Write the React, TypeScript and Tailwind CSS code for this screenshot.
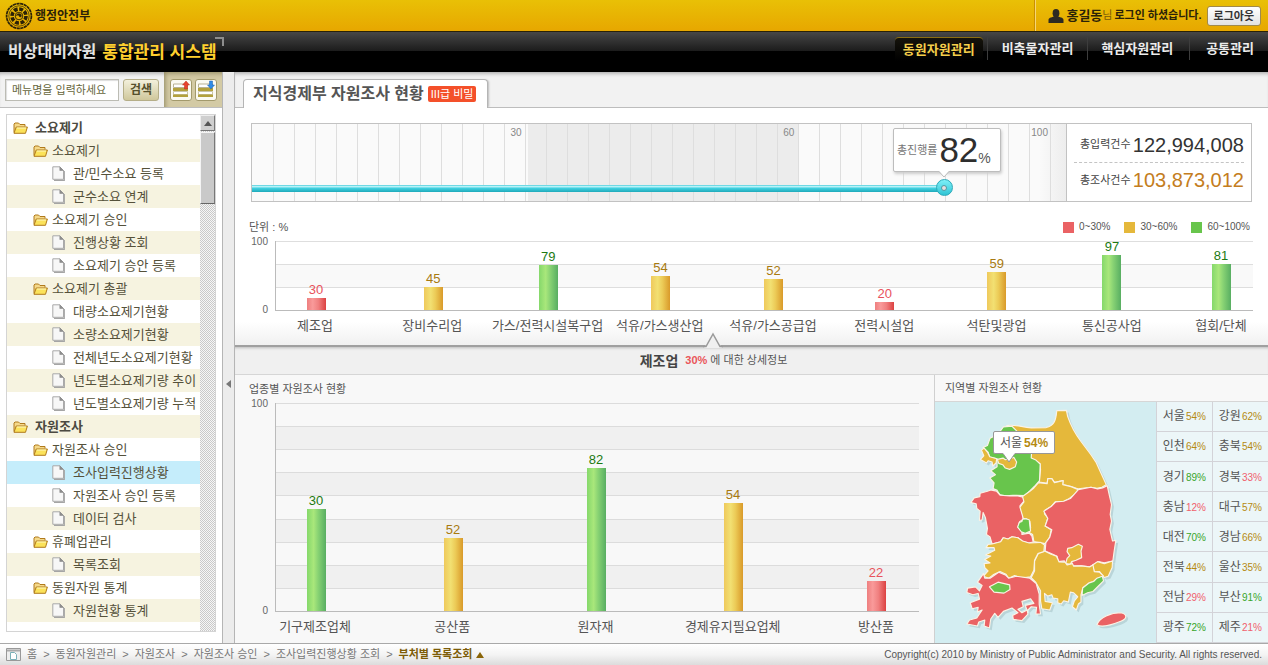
import React from "react";

type Tone = "red" | "yellow" | "green";

const barTone: Record<Tone, string> = {
  red: "bg-[linear-gradient(to_right,#ee7f7f,#f99a9a_30%,#f08080_60%,#dc4141)]",
  yellow: "bg-[linear-gradient(to_right,#efc95c,#f2e072_35%,#eccb57_60%,#d99a2a)]",
  green: "bg-[linear-gradient(to_right,#85d86b,#a9e77b_35%,#86d173_60%,#58ae62)]",
};
const valueTone: Record<Tone, string> = {
  red: "text-[#e8525c]",
  yellow: "text-[#a87a10]",
  green: "text-[#1d7a12]",
};
const cellTone: Record<Tone, string> = {
  red: "text-[#f0606c]",
  yellow: "text-[#b58a12]",
  green: "text-[#38a52a]",
};

type Bar = { name: string; value: number; size: number; tone: Tone; gap: number };

const industryBars: Bar[] = [
  { name: "제조업", value: 30, size: 12, tone: "red", gap: 0 },
  { name: "장비수리업", value: 45, size: 23, tone: "yellow", gap: 53 },
  { name: "가스/전력시설복구업", value: 79, size: 45, tone: "green", gap: 51 },
  { name: "석유/가스생산업", value: 54, size: 34, tone: "yellow", gap: 48 },
  { name: "석유/가스공급업", value: 52, size: 31, tone: "yellow", gap: 49 },
  { name: "전력시설업", value: 20, size: 8, tone: "red", gap: 47 },
  { name: "석탄및광업", value: 59, size: 38, tone: "yellow", gap: 48 },
  { name: "통신공사업", value: 97, size: 55, tone: "green", gap: 51 },
  { name: "협회/단체", value: 81, size: 46, tone: "green", gap: 45 },
];

const detailBars: Bar[] = [
  { name: "기구제조업체", value: 30, size: 102, tone: "green", gap: 0 },
  { name: "공산품", value: 52, size: 73, tone: "yellow", gap: 73 },
  { name: "원자재", value: 82, size: 143, tone: "green", gap: 79 },
  { name: "경제유지필요업체", value: 54, size: 108, tone: "yellow", gap: 73 },
  { name: "방산품", value: 22, size: 30, tone: "red", gap: 79 },
];

type Node = { name: string; level: 1 | 2 | 3; active?: boolean };
const tree: Node[] = [
  { name: "소요제기", level: 1 },
  { name: "소요제기", level: 2 },
  { name: "관/민수소요 등록", level: 3 },
  { name: "군수소요 연계", level: 3 },
  { name: "소요제기 승인", level: 2 },
  { name: "진행상황 조회", level: 3 },
  { name: "소요제기 승안 등록", level: 3 },
  { name: "소요제기 총괄", level: 2 },
  { name: "대량소요제기현황", level: 3 },
  { name: "소량소요제기현황", level: 3 },
  { name: "전체년도소요제기현황", level: 3 },
  { name: "년도별소요제기량 추이", level: 3 },
  { name: "년도별소요제기량 누적", level: 3 },
  { name: "자원조사", level: 1 },
  { name: "자원조사 승인", level: 2 },
  { name: "조사입력진행상황", level: 3, active: true },
  { name: "자원조사 승인 등록", level: 3 },
  { name: "데이터 검사", level: 3 },
  { name: "휴폐업관리", level: 2 },
  { name: "목록조회", level: 3 },
  { name: "동원자원 통계", level: 2 },
  { name: "자원현황 통계", level: 3 },
];

type Region = [string, number, Tone];
const regions: [Region, Region][] = [
  [["서울", 54, "yellow"], ["강원", 62, "yellow"]],
  [["인천", 64, "yellow"], ["충북", 54, "yellow"]],
  [["경기", 89, "green"], ["경북", 33, "red"]],
  [["충남", 12, "red"], ["대구", 57, "yellow"]],
  [["대전", 70, "green"], ["경남", 66, "yellow"]],
  [["전북", 44, "yellow"], ["울산", 35, "yellow"]],
  [["전남", 29, "red"], ["부산", 91, "green"]],
  [["광주", 72, "green"], ["제주", 21, "red"]],
];

function Emblem() {
  return (
    <svg viewBox="0 0 28 28" className="h-7 w-7" fill="none" stroke="#2b2208">
      <circle cx="14" cy="14" r="12.400" strokeWidth="1.700" strokeDasharray="3.200 0.500" />
      <circle cx="14" cy="14" r="10.200" strokeWidth="0.700" />
      <circle cx="14" cy="14" r="7" strokeWidth="3.600" strokeDasharray="3.900 1.600" />
      <circle cx="14" cy="14" r="3.800" strokeWidth="0.900" />
      <path d="M11.5 14a2.5 2.5 0 0 1 5 0 1.3 1.3 0 0 1-2.5 0 1.3 1.3 0 0 0-2.5 0z" fill="#2b2208" strokeWidth="0.4" />
    </svg>
  );
}

function FolderIcon() {
  return (
    <svg viewBox="0 0 15 12" className="h-3 w-[15px] shrink-0">
      <path d="M1 10.5V2l1-1h3.500l1.500 1.500h5v2" fill="#f5d98a" stroke="#b07a1c" />
      <path d="M1 11.300l2.200-6.300h11.200l-1.900 6.300z" fill="#fbe25a" stroke="#b07a1c" />
      <path d="M3.800 6h9.200" stroke="#fff8c0" />
    </svg>
  );
}

function PageIcon() {
  return (
    <svg viewBox="0 0 13 15" className="h-[15px] w-[13px] shrink-0">
      <path d="M2 14.300h10.300V5" fill="none" stroke="#a5a5a5" strokeWidth="1.200" />
      <path d="M.8.8h7l3.700 3.700v8.800H.8z" fill="#f7f7f7" stroke="#a9a9a9" />
      <path d="M7.800.8v3.700h3.700z" fill="#8d8d8d" stroke="#8d8d8d" strokeWidth=".6" />
    </svg>
  );
}

function ListIcon({ up }: { up: boolean }) {
  return (
    <svg viewBox="0 0 20 20" className="h-5 w-5">
      <path d="M2.500 4h14v3.500h-14z" fill="#fff" stroke="#b9b394" />
      <path d="M2 8h15v3H2z" fill="#b3a13c" />
      <path d="M2.500 11.500h14v3h-14z" fill="#fff" stroke="#c9c4a8" />
      <path d="M2 14.500h15v2.500H2z" fill="#b3a13c" />
      {up ? (
        <path d="M15 1l3.500 4h-2v4h-3V5h-2z" fill="#e8432e" stroke="#b92a18" strokeWidth=".5" />
      ) : (
        <path d="M15 9l3.500-4h-2V1h-3v4h-2z" fill="#2f8be8" stroke="#1a62b0" strokeWidth=".5" />
      )}
    </svg>
  );
}

function Header() {
  return (
    <header>
      <div className="flex h-8 items-center justify-between border-b border-[#2a2208] bg-[linear-gradient(#e9c006,#e7a700)] pl-[5px]">
        <a href="#home" className="flex items-center gap-[2px] text-xs font-bold text-[#2b2208]">
          <Emblem />
          행정안전부
        </a>
        <div className="flex h-full items-center border-l border-[#f6d676] pr-[7px] pl-3 text-[11px] text-[#2b2208] shadow-[-1px_0_0_#c98f00]">
          <svg viewBox="0 0 16 14" className="mr-[2px] h-[14px] w-4" fill="#2d2a22">
            <ellipse cx="8" cy="4.300" rx="3.400" ry="4.200" />
            <path d="M.5 14v-3c0-1.500 1-2.200 2.500-2.600L6 7.600h4l3 .8c1.500.4 2.500 1.100 2.500 2.600v3z" />
          </svg>
          <strong className="text-[13px]">홍길동</strong>
          <span className="text-[#7a5a08]">님</span>
          <span className="ml-[2px] font-bold">로그인 하셨습니다.</span>
          <button className="ml-[5px] h-5 rounded-[3px] border border-[#a08a4c] bg-[linear-gradient(#ffffff,#e2e2e2)] px-[6px] leading-4 font-bold text-[#333]">
            로그아웃
          </button>
        </div>
      </div>
      <div className="flex h-10 justify-between bg-[linear-gradient(#474747,#1c1c1c_47%,#000_48%,#000)]">
        <h1 className="relative flex items-center gap-[6px] pl-2 text-[16px] font-bold text-[#e4e4e4]">
          비상대비자원
          <span className="text-[17px] text-[#ffcf2e]">통합관리 시스템</span>
          <span className="absolute top-[5px] -right-[7px] h-[9px] w-[9px] border-t-2 border-r-2 border-[#8e8e8e]" />
        </h1>
        <nav className="flex items-start pt-[5px] text-[13px] leading-[23px] font-bold text-[#ececec]">
          <a
            href="#mobilize"
            className="mr-1 rounded-t border-t border-[#8b6e12] bg-[linear-gradient(#15130c,#000)] px-2 text-[#f5cf4b]"
          >
            동원자원관리
          </a>
          <a href="#stock" className="border-l border-[#3d3d3d] px-[14px]">비축물자관리</a>
          <a href="#core" className="border-l border-[#3d3d3d] pr-4 pl-[13px]">핵심자원관리</a>
          <a href="#common" className="border-l border-[#3d3d3d] pr-[14px] pl-4">공통관리</a>
        </nav>
      </div>
    </header>
  );
}

const rowIndent = {
  1: "pl-[6px] gap-[7px] font-bold text-[#4c4a42]",
  2: "pl-[26px] gap-1",
  3: "pl-[45px] gap-2",
};

function Sidebar() {
  return (
    <aside className="flex w-[222px] shrink-0 flex-col bg-white">
      <form className="flex h-9 border-b border-[#bdbdbd] bg-[#f2f2f2] shadow-[inset_0_4px_4px_-3px_#999]">
        <div className="flex flex-1 items-center gap-1 pl-[5px]">
          <input
            aria-label="메뉴명"
            placeholder="메뉴명을 입력하세요"
            className="h-[22px] w-[114px] border border-[#bcbcb4] bg-white px-[6px] text-[11px] shadow-[inset_1px_1px_1px_#ddd] placeholder:text-[#66663c]"
          />
          <button
            type="button"
            className="h-[22px] w-9 rounded-[3px] border border-[#b5ae88] bg-[linear-gradient(#f3f0dc,#cfc79b)] text-xs leading-4 font-bold text-[#55502c]"
          >
            검색
          </button>
        </div>
        <div className="flex w-[58px] items-center gap-[3px] bg-[#d3caa4] pl-[6px] shadow-[inset_4px_4px_5px_-3px_#8f8660]">
          <button type="button" aria-label="모두 접기" className="flex h-[22px] w-[22px] items-center justify-center rounded-[3px] border border-[#a39a6c] bg-[#fbfaf2]">
            <ListIcon up />
          </button>
          <button type="button" aria-label="모두 펼치기" className="flex h-[22px] w-[22px] items-center justify-center rounded-[3px] border border-[#a39a6c] bg-[#fbfaf2]">
            <ListIcon up={false} />
          </button>
        </div>
      </form>
      <div className="mx-[6px] mt-[6px] mb-[11px] flex flex-1 border border-[#d4d4d4]">
        <ul className="flex-1 pt-px text-[13px] text-[#55513a]">
          {tree.map((node, i) => (
            <li key={i} className={node.active ? "bg-[#c5edfb]" : i % 2 ? "bg-[#f6f3e0]" : "bg-white"}>
              <a href="#menu" className={`flex h-[23px] items-center whitespace-nowrap ${rowIndent[node.level]}`}>
                {node.level === 3 ? <PageIcon /> : <FolderIcon />}
                <span>{node.name}</span>
              </a>
            </li>
          ))}
        </ul>
        <div className="w-[15px] bg-[repeating-conic-gradient(#c9c9c9_0_25%,#f6f6f6_0_50%)] bg-[length:2px_2px]">
          <button
            aria-label="위로"
            className="flex h-4 w-full items-center justify-center border border-t-[#eee] border-r-[#777] border-b-[#777] border-l-[#eee] bg-[#cfcfcf]"
          >
            <svg viewBox="0 0 8 5" className="h-[5px] w-2" fill="#555">
              <path d="M4 0l4 5H0z" />
            </svg>
          </button>
          <div className="mt-px h-[72px] border border-t-[#f4f4f4] border-r-[#777] border-b-[#666] border-l-[#f4f4f4] bg-[#c9c9c9]" />
        </div>
      </div>
    </aside>
  );
}

function BarChart({ bars, plot, spacing }: { bars: Bar[]; plot: string; spacing: string }) {
  return (
    <div className="flex">
      <div className="mr-[7px] w-[19px] shrink-0 text-right text-[10px] leading-[10px] text-[#666]">
        <div className={`flex flex-col justify-between ${plot}`}>
          <span className="-mt-1">100</span>
          <span className="-mb-1">0</span>
        </div>
      </div>
      <div className="min-w-0 flex-1">
        <div className={`relative border-b border-l border-[#bbb] ${plot}`}>
          <div className="absolute inset-0 flex flex-col">
            {plot === "h-[70px]" ? (
              <>
                <div className="flex-1 border-t border-[#dedede]" />
                <div className="flex-1 border-y border-[#dedede] bg-[#f9f9f9]" />
                <div className="flex-1" />
              </>
            ) : (
              Array.from({ length: 9 }, (_, i) => (
                <div key={i} className={`flex-1 border-t border-[#dcdcdc] ${i % 2 ? "bg-[#f0f0f0]" : "bg-[#f8f8f8]"}`} />
              ))
            )}
          </div>
          <div className={`relative flex h-full items-end ${spacing}`}>
            {bars.map((bar) => (
              <React.Fragment key={bar.name}>
                <span className="basis-0" style={{ flexGrow: bar.gap }} />
                <div className="flex w-16 shrink-0 flex-col items-center">
                  <span className={`text-[13px] leading-[17px] ${valueTone[bar.tone]}`}>{bar.value}</span>
                  <div className={`w-[19px] ${barTone[bar.tone]}`} style={{ height: bar.size }} />
                </div>
              </React.Fragment>
            ))}
          </div>
        </div>
        <div className={`mt-[5px] flex h-[18px] items-center text-[13px] text-[#555] ${spacing}`}>
          {bars.map((bar) => (
            <React.Fragment key={bar.name}>
              <span className="basis-0" style={{ flexGrow: bar.gap }} />
              <span className="flex w-16 shrink-0 justify-center whitespace-nowrap">{bar.name}</span>
            </React.Fragment>
          ))}
        </div>
      </div>
    </div>
  );
}

function Progress() {
  return (
    <section className="flex h-[79px] border border-[#c2c2c2]">
      <div className="relative flex min-w-0 flex-1 text-right text-[10px] leading-[18px] text-[#888]">
        <div className="grow-[276] basis-0 bg-[#fafafa]"><p className="pr-[6px]">30</p></div>
        <div className="grow-[272] basis-0 bg-[#ececec]"><p className="pr-[5px]">60</p></div>
        <div className="grow-[267] basis-0 bg-[linear-gradient(to_right,#fafafa_90%,#ededed)]"><p className="pr-[18px]">100</p></div>
        <div className="absolute inset-0 bg-[repeating-linear-gradient(to_right,#dedede_0_1px,transparent_1px_21px)] [clip-path:inset(0_0_0_2px)]" />
        <div className="absolute top-[61px] left-0 h-[7px] w-[85%] border-t border-[#6fd9e4] bg-[linear-gradient(#d9fbff,#3fd0df_40%,#1fa9ba)]" />
        <div className="absolute top-[55px] left-[85%] -ml-2 flex h-[17px] w-[17px] items-center justify-center rounded-full border border-[#2ba9b8] bg-[linear-gradient(#7ff0f8,#30c4d4)]">
          <span className="h-[6px] w-[6px] rounded-full border border-[#4f9aa3] bg-[#e8dede]" />
        </div>
        <div className="absolute top-1 left-[85%] -ml-[51px] flex h-[44px] w-[108px] items-center rounded-[2px] border border-[#bdbdbd] bg-white pl-[3px] shadow-[1px_2px_3px_#ccc]">
          <span className="text-[11px] text-[#777]">총진행률</span>
          <strong className="ml-[2px] text-[35px] leading-10 font-normal text-[#2e2e2e]">82</strong>
          <span className="mt-4 text-[14px] text-[#555]">%</span>
          <svg viewBox="0 0 10 7" className="absolute top-[42px] left-[45px] h-[7px] w-[10px]">
            <path d="M0 0h10L5 6z" fill="#fff" />
            <path d="M0 .5l5 5.500 5-5.500" fill="none" stroke="#bdbdbd" />
          </svg>
        </div>
      </div>
      <dl className="flex w-[185px] shrink-0 flex-col justify-center border-l border-[#c2c2c2] bg-white px-[7px] text-[11px] text-[#444]">
        <div className="flex h-[35px] items-center justify-between border-b border-dashed border-[#c4c4c4] pl-[6px]">
          <dt>총입력건수</dt>
          <dd className="text-[20px] leading-6 text-[#333]">122,994,008</dd>
        </div>
        <div className="flex h-[35px] items-center justify-between pl-[6px]">
          <dt>총조사건수</dt>
          <dd className="text-[20px] leading-6 text-[#c47d20]">103,873,012</dd>
        </div>
      </dl>
    </section>
  );
}

const Y = "#e5b83b";
const R = "#ea6264";
const G = "#68c54c";
const provinces: [string, string, string][] = [
  ["강원", Y, "M216 152C240 148 258 156 290 159L335 158C358 152 364 140 367 107L396 106 400 125C412 160 425 180 440 200L470 240 485 262 500 295 516 330 503 338 488 341 470 338 432 343 410 336 385 330 386 318 360 323 352 312 340 312 338 326 314 322 318 285 317 268 304 258 288 250 292 230 262 200Z"],
  ["경기", G, "M206 156L232 154 246 168 275 190 292 215 290 250 304 256 317 268 315 318 300 335 285 350 270 363 235 362 212 364 195 360 186 346 175 342 178 325 165 310 182 300 168 288 187 276 187 252 165 247 160 232 145 218 158 212 166 190 190 178Z"],
  ["인천", Y, "M148 220L140 226 147 243 137 254 155 265 160 258 172 262 174 274 184 265 186 252 165 246 158 232Z"],
  ["서울", Y, "M188 254L205 250 212 255 238 248 246 262 242 276 225 284 212 280 204 270 192 266Z"],
  ["충남", R, "M178 348L186 350 196 362 225 364 250 364 266 368 268 380 256 394 264 420 266 434 255 442 250 458 262 472 262 480 284 476 292 485 296 503 282 506 262 500 250 490 232 487 220 494 205 490 198 502 172 509 166 488 155 480 158 462 152 430 145 414 142 436 134 438 136 410 126 402 124 388 108 384 118 370 135 366 136 356 158 350 168 346Z"],
  ["충북", Y, "M264 366L272 360 286 350 298 340 312 324 338 327 340 312 352 312 360 324 386 318 385 330 410 336 432 345 420 360 405 372 388 380 362 382 350 396 330 408 330 418 340 430 332 455 350 466 346 488 332 508 298 502 294 480 284 474 288 460 286 440 274 432 266 432 262 418 256 398 268 382Z"],
  ["대전", G, "M272 433L284 436 286 455 288 470 272 477 260 472 249 458 254 444 262 441 264 434Z"],
  ["경북", R, "M519 333L526 365 532 390 528 420 532 440 527 465 535 500 545 498 540 530 536 560 510 566 492 562 476 572 465 578 440 575 415 574 412 564 395 570 390 560 372 562 368 546 350 538 332 530 334 505 346 488 352 466 332 455 340 432 328 410 350 396 364 382 388 380 408 372 432 345 470 338 490 343 505 340Z"],
  ["대구", Y, "M400 522L412 520 432 510 444 516 440 530 442 550 425 558 412 562 408 570 394 568 398 552 406 544 398 532Z"],
  ["울산", Y, "M474 573L490 562 510 568 535 560 534 580 522 606 510 610 496 592 480 592Z"],
  ["경남", Y, "M330 530L350 540 366 546 374 563 392 564 398 572 414 568 418 576 440 575 466 578 476 572 480 592 496 594 508 606 490 612 478 622 465 626 446 640 440 662 440 684 432 690 426 708 414 698 420 680 430 668 418 656 408 654 402 684 388 680 380 690 370 686 370 674 356 672 352 662 340 666 330 658 332 682 354 686 346 708 322 704 318 680 318 650 304 625 290 610 300 590 300 560 312 536Z"],
  ["부산", G, "M443 664L445 642 465 626 478 622 488 612 504 606 508 620 494 634 476 652 460 656Z"],
  ["전북", Y, "M172 509L198 502 206 490 220 494 232 487 250 490 264 500 284 506 318 504 330 512 328 532 310 538 300 558 298 588 288 608 260 612 240 604 222 612 214 600 196 592 175 602 162 612 146 606 160 590 150 580 148 568 166 566 150 556 168 545 152 542 180 528 178 520 154 520 160 510Z"],
  ["전남", R, "M146 598L150 612 166 612 192 594 212 602 222 612 245 606 286 612 305 628 314 660 314 690 318 720 304 720 306 700 290 698 278 710 272 694 298 688 288 674 262 682 266 698 250 706 262 716 278 708 280 720 262 740 236 736 234 724 250 716 232 702 206 712 190 730 180 718 168 735 164 762 148 756 150 738 132 744 128 756 96 750 104 738 126 732 142 708 128 714 130 700 112 704 106 686 134 675 130 658 114 662 96 655 98 642 122 638 134 650 142 634 128 624Z"],
  ["광주", G, "M164 638L190 624 225 632 226 646 208 657 178 654Z"],
  ["제주", R, "M488 752C496 730 530 716 560 716 580 720 580 734 560 742 535 752 500 762 488 752Z"],
];

function RegionMap() {
  return (
    <div className="relative w-[221px] shrink-0 bg-[#d3edf1]">
      <svg viewBox="0 81 666 723" className="block w-full" role="img" aria-label="지역별 지도">
        <g transform="translate(7 7)" fill="#a9c6ca" opacity=".6">
          {provinces.map(([name, , d]) => (
            <path key={name} d={d} />
          ))}
        </g>
        <g stroke="#fbf3e6" strokeWidth="3.500" strokeLinejoin="round">
          {provinces.map(([name, fill, d]) => (
            <path key={name} d={d} fill={fill} />
          ))}
        </g>
      </svg>
      <div className="absolute top-[29px] left-[58px] flex h-[23px] w-[62px] items-center justify-center gap-[2px] rounded-[2px] border border-[#979797] bg-white text-[#555]">
        <span className="text-xs">서울</span>
        <strong className="text-[12px] text-[#b58a12]">54%</strong>
        <svg viewBox="0 0 14 11" className="absolute top-[20px] left-[8px] h-[11px] w-[14px]">
          <path d="M0 0h14L7 10z" fill="#fff" />
          <path d="M1 1.500l6 8.500 6-8.500" fill="none" stroke="#979797" />
        </svg>
      </div>
    </div>
  );
}

function Legend() {
  return (
    <div className="flex h-4 items-center justify-between text-[10px] text-[#555]">
      <span className="text-[11px]">단위 : %</span>
      <ul className="flex gap-[14px]">
        <li className="flex items-center gap-[5px]"><i className="h-[11px] w-[11px] bg-[#ea6264]" />0~30%</li>
        <li className="flex items-center gap-[5px]"><i className="h-[11px] w-[11px] bg-[#e5b83b]" />30~60%</li>
        <li className="flex items-center gap-[5px]"><i className="h-[11px] w-[11px] bg-[#68c54c]" />60~100%</li>
      </ul>
    </div>
  );
}

function Main() {
  return (
    <main className="flex min-w-0 flex-1 flex-col bg-[#f8f8f8]">
      <div className="flex h-9 items-end border-b border-[#bdbdbd] bg-[#f2f2f2] pl-2 shadow-[inset_0_4px_4px_-3px_#999]">
        <h2 className="-mb-px flex h-[29px] items-center gap-1 rounded-t-[4px] border border-b-0 border-[#b5b5b5] bg-white px-[9px] pr-[11px] text-[16px] font-bold text-[#555] shadow-[2px_0_2px_-1px_#bbb]">
          지식경제부 자원조사 현황
          <span className="rounded-[2px] bg-[#f4502a] px-[3px] text-[11px] leading-4 font-normal text-white">III급 비밀</span>
        </h2>
      </div>
      <div className="border-b-2 border-[#a0a0a0] bg-[linear-gradient(#fff_90%,#f1f1f1)] pt-[15px] pr-[15px] pb-[11px] pl-[14px]">
        <div className="pr-px pl-[2px]">
          <Progress />
        </div>
        <div className="mt-[17px] mb-[6px] pr-[3px]">
          <Legend />
        </div>
        <BarChart bars={industryBars} plot="h-[70px]" spacing="pl-2" />
      </div>
      <div className="flex h-7 items-center justify-center border-b border-[#d6d6d6] bg-[#f0f0f0] pr-[76px] shadow-[inset_0_3px_3px_-2px_#bbb]">
        <p className="relative flex items-center text-[11px] text-[#555]">
          <svg viewBox="0 0 20 16" className="absolute -top-[20px] left-1/2 -ml-[11px] h-4 w-5">
            <path d="M1 16h18L10 2z" fill="#f0f0f0" />
            <path d="M0 14.500h3L10 2l7 12.500h3" fill="none" stroke="#9a9a9a" strokeWidth="1.500" />
          </svg>
          <strong className="text-[14px] leading-[18px] text-[#444]">제조업</strong>
          <strong className="mr-[3px] ml-[7px] text-[11px] text-[#ea5559]">30%</strong>
          에 대한 상세정보
        </p>
      </div>
      <div className="flex flex-1">
        <section className="min-w-0 flex-1 pr-[15px] pl-[14px]">
          <h3 className="flex h-7 items-center text-[11px] text-[#555]">업종별 자원조사 현황</h3>
          <BarChart bars={detailBars} plot="h-[209px]" spacing="pt-px pr-[11px] pl-2" />
        </section>
        <section className="flex w-[334px] shrink-0 flex-col border-l border-[#d0d0d0]">
          <h3 className="flex h-[27px] items-center border-b border-[#d6d6d6] pl-[10px] text-[11px] text-[#555]">
            지역별 자원조사 현황
          </h3>
          <div className="flex flex-1">
            <RegionMap />
            <table className="flex-1 border-collapse bg-[#ecf6f8] text-xs text-[#555]">
              <tbody>
                {regions.map((row) => (
                  <tr key={row[0][0]}>
                    {row.map(([name, value, tone]) => (
                      <td key={name} className="w-1/2 border-b border-l border-[#d3d3d8] p-0 text-center whitespace-nowrap">
                        {name}
                        <span className={`ml-px text-[10px] ${cellTone[tone]}`}>{value}%</span>
                      </td>
                    ))}
                  </tr>
                ))}
              </tbody>
            </table>
          </div>
        </section>
      </div>
    </main>
  );
}

const crumbs = ["홈", "동원자원관리", "자원조사", "자원조사 승인", "조사입력진행상황 조회"];

function Footer() {
  return (
    <footer className="flex h-[22px] items-center justify-between border-t border-[#a9a9a9] bg-[linear-gradient(#fff,#f4f4f4_50%,#dcdcdc)] pr-[6px] pl-[6px] text-[11px] text-[#777]">
      <nav aria-label="위치" className="flex items-center gap-[6px]">
        <svg viewBox="0 0 15 13" className="h-[13px] w-[15px]" fill="none">
          <path d="M.5.5h14v12H.5z" fill="#eee" stroke="#999" />
          <path d="M1 2.500h13" stroke="#aaa" strokeWidth="2" />
          <path d="M4.500 4.500h4l2 2v5h-6z" fill="#fff" stroke="#7bb0b8" />
        </svg>
        {crumbs.map((crumb) => (
          <React.Fragment key={crumb}>
            <a href="#crumb">{crumb}</a>
            <span>&gt;</span>
          </React.Fragment>
        ))}
        <a href="#list" className="flex items-center gap-1 font-bold text-[#7d5c08]">
          부처별 목록조회
          <svg viewBox="0 0 8 6" className="h-[6px] w-2" fill="#8a6508">
            <path d="M4 0l4 6H0z" />
          </svg>
        </a>
      </nav>
      <small className="text-[10px] text-[#555]">
        Copyright(c) 2010 by Ministry of Public Administrator and Security. All rights reserved.
      </small>
    </footer>
  );
}

export default function App() {
  return (
    <div className="flex min-h-screen flex-col bg-white font-['Liberation_Sans','Noto_Sans_CJK_KR',sans-serif] leading-none">
      <Header />
      <div className="flex flex-1">
        <Sidebar />
        <div className="flex w-[13px] shrink-0 items-center justify-center border-x border-[#b5b5b5] bg-[#ececec] pt-[52px]">
          <button aria-label="메뉴 접기">
            <svg viewBox="0 0 5 8" className="h-2 w-[5px]" fill="#777">
              <path d="M5 0v8L0 4z" />
            </svg>
          </button>
        </div>
        <Main />
      </div>
      <Footer />
    </div>
  );
}
